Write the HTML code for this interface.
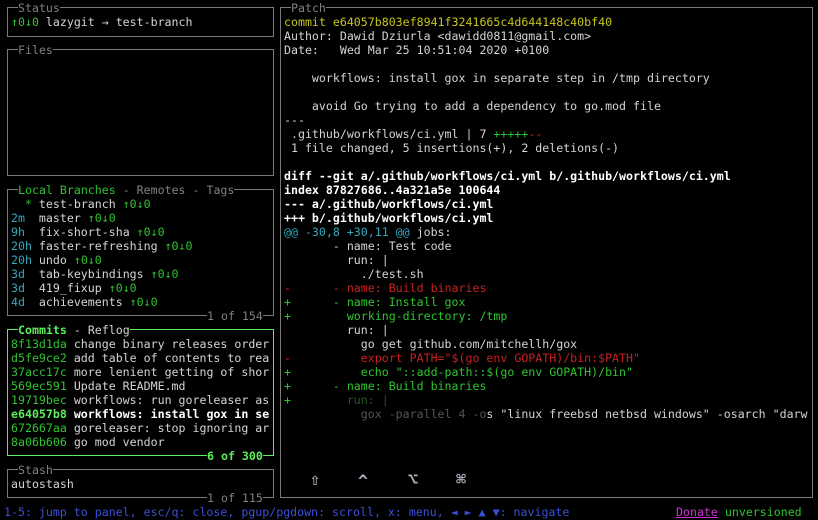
<!DOCTYPE html>
<html><head><meta charset="utf-8"><style>
html,body{margin:0;padding:0;background:#000;width:818px;height:520px;overflow:hidden}
body{position:relative;font-family:"DejaVu Sans Mono","Liberation Mono",monospace;font-size:11.6px;color:#d4d4d4}
.r{position:absolute;white-space:pre;height:14px;line-height:14px;top:0}
.b{position:absolute;border:1px solid #7a7a7a;box-sizing:border-box}
.t{position:absolute;white-space:pre;height:14px;line-height:14px;background:#000;color:#808080}
.g{color:#2fc42f}.c{color:#35a8bc}.y{color:#c6c61c}.rd{color:#c82020}.w{color:#fff;font-weight:bold}
.gb{color:#5af05a;font-weight:bold}.dk{color:#1f5a1f}.dg{color:#555}
.bl{color:#3a4fd8}.m{color:#d22fd2;text-decoration:underline}
.ic{position:absolute;color:#aab0bc;font-size:17px;line-height:20px;width:20px;text-align:center;font-weight:bold}
</style></head><body>
<div class="b" style="left:7px;top:7px;width:267px;height:30px"></div>
<div class="b" style="left:7px;top:49px;width:267px;height:127px"></div>
<div class="b" style="left:7px;top:189px;width:267px;height:127px"></div>
<div class="b" style="left:7px;top:329px;width:267px;height:127px;border-color:#5af05a"></div>
<div class="b" style="left:7px;top:469px;width:267px;height:29px"></div>
<div class="b" style="left:280px;top:7px;width:533px;height:491px"></div>
<div class="t" style="left:18px;top:1px">Status</div>
<div class="t" style="left:18px;top:43px">Files</div>
<div class="t" style="left:18px;top:183px"><span class="g">Local Branches</span> - Remotes - Tags</div>
<div class="t" style="left:18px;top:323px"><span class="gb">Commits</span><span style="color:#d4d4d4"> - Reflog</span></div>
<div class="t" style="left:18px;top:463px">Stash</div>
<div class="t" style="left:291px;top:1px">Patch</div>
<div class="t" style="left:207px;top:309px">1 of 154</div>
<div class="t gb" style="left:207px;top:449px">6 of 300</div>
<div class="t" style="left:207px;top:491px">1 of 115</div>
<div class="r" style="left:11px;top:15px"><span class="g">↑0↓0</span> lazygit → test-branch</div>
<div class="r" style="left:11px;top:197px">  <span class="g">*</span> test-branch <span class="g">↑0↓0</span></div>
<div class="r" style="left:11px;top:211px"><span class="c">2m</span>  master <span class="g">↑0↓0</span></div>
<div class="r" style="left:11px;top:225px"><span class="c">9h</span>  fix-short-sha <span class="g">↑0↓0</span></div>
<div class="r" style="left:11px;top:239px"><span class="c">20h</span> faster-refreshing <span class="g">↑0↓0</span></div>
<div class="r" style="left:11px;top:253px"><span class="c">20h</span> undo <span class="g">↑0↓0</span></div>
<div class="r" style="left:11px;top:267px"><span class="c">3d</span>  tab-keybindings <span class="g">↑0↓0</span></div>
<div class="r" style="left:11px;top:281px"><span class="c">3d</span>  419_fixup <span class="g">↑0↓0</span></div>
<div class="r" style="left:11px;top:295px"><span class="c">4d</span>  achievements <span class="g">↑0↓0</span></div>
<div class="r" style="left:11px;top:337px"><span class="g">8f13d1da</span> change binary releases order</div>
<div class="r" style="left:11px;top:351px"><span class="g">d5fe9ce2</span> add table of contents to rea</div>
<div class="r" style="left:11px;top:365px"><span class="g">37acc17c</span> more lenient getting of shor</div>
<div class="r" style="left:11px;top:379px"><span class="g">569ec591</span> Update README.md</div>
<div class="r" style="left:11px;top:393px"><span class="g">19719bec</span> workflows: run goreleaser as</div>
<div class="r" style="left:11px;top:407px"><span class="gb">e64057b8</span> <span class="w">workflows: install gox in se</span></div>
<div class="r" style="left:11px;top:421px"><span class="g">672667aa</span> goreleaser: stop ignoring ar</div>
<div class="r" style="left:11px;top:435px"><span class="g">8a06b606</span> go mod vendor</div>
<div class="r" style="left:11px;top:477px">autostash</div>
<div class="r y" style="left:284px;top:15px">commit e64057b803ef8941f3241665c4d644148c40bf40</div>
<div class="r" style="left:284px;top:29px">Author: Dawid Dziurla &lt;dawidd0811@gmail.com&gt;</div>
<div class="r" style="left:284px;top:43px">Date:   Wed Mar 25 10:51:04 2020 +0100</div>
<div class="r" style="left:284px;top:71px">    workflows: install gox in separate step in /tmp directory</div>
<div class="r" style="left:284px;top:99px">    avoid Go trying to add a dependency to go.mod file</div>
<div class="r" style="left:284px;top:113px">---</div>
<div class="r" style="left:284px;top:127px"> .github/workflows/ci.yml | 7 <span class="g">+++++</span><span class="rd">--</span></div>
<div class="r" style="left:284px;top:141px"> 1 file changed, 5 insertions(+), 2 deletions(-)</div>
<div class="r w" style="left:284px;top:169px">diff --git a/.github/workflows/ci.yml b/.github/workflows/ci.yml</div>
<div class="r w" style="left:284px;top:183px">index 87827686..4a321a5e 100644</div>
<div class="r w" style="left:284px;top:197px">--- a/.github/workflows/ci.yml</div>
<div class="r w" style="left:284px;top:211px">+++ b/.github/workflows/ci.yml</div>
<div class="r" style="left:284px;top:225px"><span class="c">@@ -30,8 +30,11 @@</span> jobs:</div>
<div class="r" style="left:284px;top:239px">       - name: Test code</div>
<div class="r" style="left:284px;top:253px">         run: |</div>
<div class="r" style="left:284px;top:267px">           ./test.sh</div>
<div class="r rd" style="left:284px;top:281px">-      - name: Build binaries</div>
<div class="r g" style="left:284px;top:295px">+      - name: Install gox</div>
<div class="r g" style="left:284px;top:309px">+        working-directory: /tmp</div>
<div class="r" style="left:284px;top:323px">         run: |</div>
<div class="r" style="left:284px;top:337px">           go get github.com/mitchellh/gox</div>
<div class="r rd" style="left:284px;top:351px">-          export PATH="$(go env GOPATH)/bin:$PATH"</div>
<div class="r g" style="left:284px;top:365px">+          echo "::add-path::$(go env GOPATH)/bin"</div>
<div class="r g" style="left:284px;top:379px">+      - name: Build binaries</div>
<div class="r" style="left:284px;top:393px"><span class="g">+</span><span class="dk">        run: |</span></div>
<div class="r" style="left:284px;top:407px"><span class="dg">           gox -parallel 4 -o</span>s "linux freebsd netbsd windows" -osarch "darw</div>
<div class="ic" style="left:305px;top:470px">⇧</div>
<div class="ic" style="left:353px;top:472px">^</div>
<div class="ic" style="left:403px;top:470px">⌥</div>
<div class="ic" style="left:451px;top:470px">⌘</div>
<div class="r bl" style="left:4px;top:505px">1-5: jump to panel, esc/q: close, pgup/pgdown: scroll, x: menu, ◄ ► ▲ ▼: navigate</div>
<div class="r" style="left:676px;top:505px"><span class="m">Donate</span> <span class="g">unversioned</span></div>
</body></html>
